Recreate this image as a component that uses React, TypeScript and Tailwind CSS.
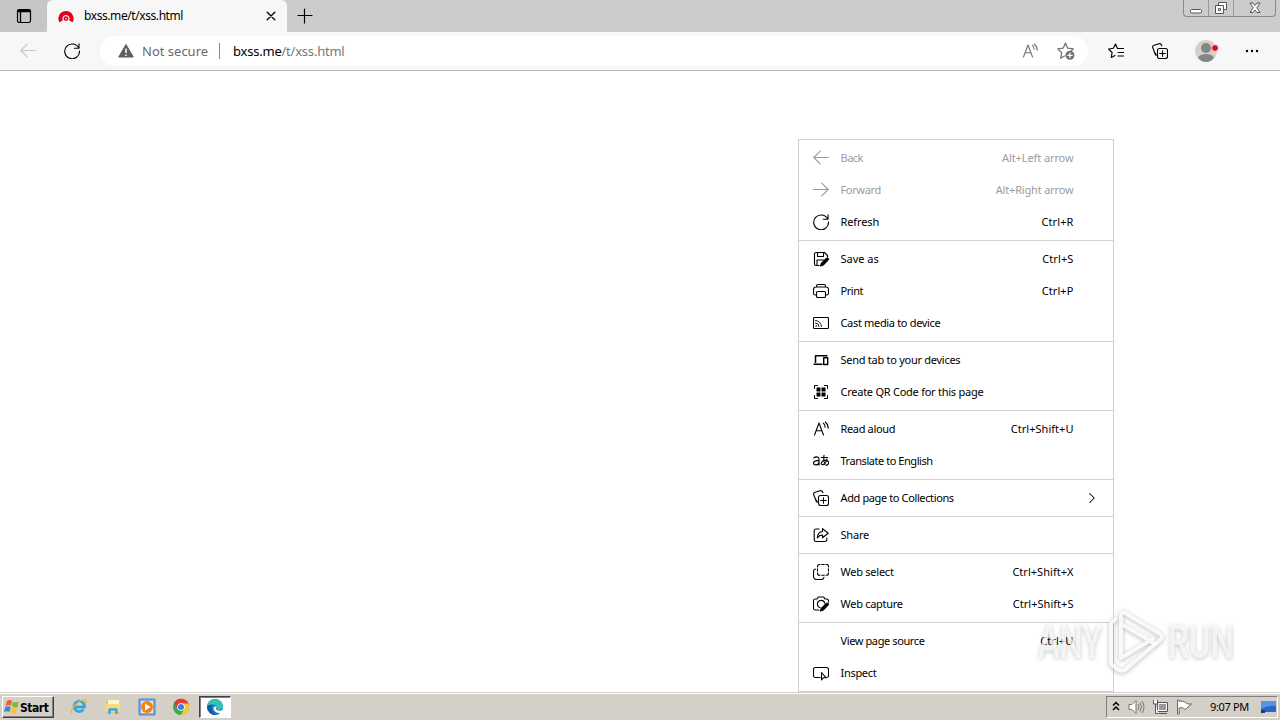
import React from "react";

type P = { children?: React.ReactNode; className?: string; size?: number };

function Icon({ children, className = "", size = 16 }: P) {
  return (
    <svg width={size} height={size} viewBox="0 0 16 16" fill="none" stroke="currentColor" strokeWidth="1.1" strokeLinecap="round" strokeLinejoin="round" className={"shrink-0 " + className}>
      {children}
    </svg>
  );
}

const icons: Record<string, React.ReactNode> = {
  back: <path d="M15.500 7.500H.8M7.200 1.100.8 7.500l6.400 6.400" />,
  forward: <path d="M.5 7.500h14.700M8.800 1.100 15.200 7.500l-6.400 6.400" />,
  refresh: <path d="M14.800 5.200A7.400 7.400 0 1 0 15.500 8M15 .8v4.500h-4.600" />,
  save: (
    <>
      <path d="M6 14.500H3A1.500 1.500 0 0 1 1.500 13V3A1.500 1.500 0 0 1 3 1.500h8.500l3 3V6M4.500 1.700v3.800h6V1.700M4 14.300V9h6.500" />
      <path d="m7.500 15 .8-2.500 5-5c1.300-1 2.700.3 1.700 1.600L10.200 14z" fill="currentColor" />
    </>
  ),
  print: (
    <>
      <path d="M3.500 12H2.300A1.800 1.800 0 0 1 .5 10.200V6.500A2.500 2.500 0 0 1 3 4h10a2.500 2.500 0 0 1 2.500 2.500v3.700a1.800 1.800 0 0 1-1.800 1.800h-1.200M3.500 4V3A1.500 1.500 0 0 1 5 1.500h6A1.500 1.500 0 0 1 12.500 3v1" />
      <rect x="3.500" y="8.500" width="9" height="6" rx="1.300" />
    </>
  ),
  cast: (
    <>
      <rect x=".5" y="2.500" width="15" height="11" rx="1" />
      <path d="M2.500 5.500A6 6 0 0 1 8.500 11.500M2.500 8A3.500 3.500 0 0 1 6 11.500" strokeWidth=".9" />
      <circle cx="3.200" cy="11" r=".8" fill="currentColor" stroke="none" />
    </>
  ),
  send: (
    <>
      <path d="M2.500 11V3.700h12M.5 12.300h9" strokeWidth="1.500" strokeLinecap="butt" />
      <rect x="10.700" y="5.700" width="4" height="6.800" strokeWidth="1.400" />
    </>
  ),
  qr: (
    <>
      <path d="M1.500 4.500v-3h3M11.500 1.500h3v3M1.500 11.500v3h3M11.500 14.500h3v-3" strokeWidth="1" />
      <path d="M3.500 3.500h4v4h-4zM8.500 3.500h4v4h-4zM3.500 8.500h4v4h-4zM8.500 8.500h4v4h-4z" fill="currentColor" stroke="none" />
    </>
  ),
  read: <path d="m1.500 14 4.500-12 4.500 12M3 9.800h6M10.300 2.200c1.200 1 1.800 2.400 1.800 4M12.300 1c2 1.700 2.900 3.800 2.900 6.200" />,
  translate: (
    <>
      <path d="M.9 4.800C2.500 3.600 6 3.200 6 6.300V12M6 7.300c-3 0-5.500.5-5.500 2.700 0 2.800 5 2.400 5.500-.6" strokeWidth="1.200" />
      <path d="M8.200 4.500h6.500M11 2.300c-.5 3.200 0 6.700.8 9.200M14 6c-.8 2.600-2.700 5.700-4.500 5.700-2.200 0-1.500-4 2.300-4.300 5-.3 4.900 4.300 1.200 5" />
    </>
  ),
  collections: (
    <>
      <path d="M3.500 12 .8 4.800C.3 3.500.8 2.700 2.100 2.300L7 .8c1.300-.4 2 0 2.500 1.200l.3.800M4.300 12.300 3.300 10" />
      <rect x="5.500" y="5.500" width="10" height="10" rx="2" />
      <path d="M10.500 7.700v5.600M7.700 10.500h5.600" />
    </>
  ),
  share: (
    <>
      <path d="M6 2H3A1.800 1.800 0 0 0 1.200 3.800v9A1.800 1.800 0 0 0 3 14.500h9a1.800 1.800 0 0 0 1.800-1.800V11" />
      <path d="M9.500 4.500V1.600l5.700 4.600-5.700 4.500V8C7 8 5.500 9 4.300 11c.2-4 2-6.300 5.200-6.500z" />
    </>
  ),
  select: (
    <>
      <path d="M4.500 3V2.500q0-2 2-2H7M8.800.5h2.400M13 .5h.5q2 0 2 2V3M15.500 4.700V7M15.500 8.700v.6q0 2-2 2H13M11.200 11.300H8.800M7 11.300h-.5q-2 0-2-2v-.6M4.500 7V4.700" />
      <path d="M2.700 5C1.200 5.200.5 6 .5 7.500v5a3 3 0 0 0 3 3h5c1.500 0 2.300-.8 2.500-2.300" />
    </>
  ),
  capture: (
    <>
      <path d="M6 14H2.300A1.800 1.800 0 0 1 .5 12.200V4.800A1.800 1.800 0 0 1 2.300 3H4l1.200-2h5.600L12 3h1.700a1.800 1.800 0 0 1 1.800 1.800V6M7.200 11.700a3.700 3.700 0 1 1 4.500-4.500" />
      <path d="m7.500 15 .8-2.500 5-5c1.300-1 2.700.3 1.700 1.600L10.200 14z" fill="currentColor" />
    </>
  ),
  inspect: (
    <>
      <path d="M7 12.500H2.300A1.800 1.800 0 0 1 .5 10.700V4.300A1.800 1.800 0 0 1 2.300 2.500h11.400a1.800 1.800 0 0 1 1.800 1.800v6.400c0 1-.7 1.800-1.800 1.800" />
      <path d="M8.500 7.500v7.500l1.800-2.200h2.900z" />
    </>
  ),
};

type Item = { icon?: string; label: string; keys?: string; off?: boolean; sub?: boolean; track: string; keyTrack?: string };

const groups: Item[][] = [
  [
    { icon: "back", label: "Back", keys: "Alt+Left arrow", off: true, track: "tracking-[-0.5px]", keyTrack: "tracking-[-0.1px]" },
    { icon: "forward", label: "Forward", keys: "Alt+Right arrow", off: true, track: "tracking-[-0.35px]", keyTrack: "tracking-[-0.17px]" },
    { icon: "refresh", label: "Refresh", keys: "Ctrl+R", track: "tracking-[-0.1px]", keyTrack: "tracking-[0.1px]" },
  ],
  [
    { icon: "save", label: "Save as", keys: "Ctrl+S", track: "tracking-[0px]", keyTrack: "tracking-[0.1px]" },
    { icon: "print", label: "Print", keys: "Ctrl+P", track: "tracking-[-0.45px]", keyTrack: "tracking-[0.1px]" },
    { icon: "cast", label: "Cast media to device", track: "tracking-[-0.33px]" },
  ],
  [
    { icon: "send", label: "Send tab to your devices", track: "tracking-[-0.27px]" },
    { icon: "qr", label: "Create QR Code for this page", track: "tracking-[-0.25px]" },
  ],
  [
    { icon: "read", label: "Read aloud", keys: "Ctrl+Shift+U", track: "tracking-[-0.35px]" },
    { icon: "translate", label: "Translate to English", track: "tracking-[-0.45px]" },
  ],
  [{ icon: "collections", label: "Add page to Collections", sub: true, track: "tracking-[-0.38px]" }],
  [{ icon: "share", label: "Share", track: "tracking-[-0.2px]" }],
  [
    { icon: "select", label: "Web select", keys: "Ctrl+Shift+X", track: "tracking-[-0.25px]" },
    { icon: "capture", label: "Web capture", keys: "Ctrl+Shift+S", track: "tracking-[-0.28px]" },
  ],
  [
    { label: "View page source", keys: "Ctrl+U", track: "tracking-[-0.39px]", keyTrack: "tracking-[0.1px]" },
    { icon: "inspect", label: "Inspect", track: "tracking-[-0.3px]" },
  ],
];

function ContextMenu() {
  return (
    <div className="absolute left-[798px] top-[139px] w-[316px] border border-[#d0d0d0] bg-white text-[11px] text-black">
      {groups.map((g, i) => (
        <div key={i} className={"py-[2px] " + (i ? "border-t border-[#d2d2d2]" : "")}>
          {g.map((it) => (
            <div key={it.label} className={"flex h-8 items-center pl-[14px] " + (it.off ? "text-[#9c9c9c]" : "")}>
              <div className="w-[27.5px] shrink-0">{it.icon && <Icon>{icons[it.icon]}</Icon>}</div>
              <span className={"whitespace-nowrap " + it.track}>{it.label}</span>
              <span className={"ml-auto mr-[39.5px] whitespace-nowrap " + (it.keyTrack ?? "tracking-[0.03px]")}>{it.keys}</span>
              {it.sub && <Icon size={12} className="-ml-[27px] mr-[15px]"><path d="m5 2 6 6-6 6" strokeWidth="1.400" /></Icon>}
            </div>
          ))}
        </div>
      ))}
    </div>
  );
}

function TitleBar() {
  return (
    <div className="relative flex h-8 bg-[#cccccc]">
      <div className="flex w-[47px] items-center justify-center rounded-br-md bg-[#c6c6c6]">
        <Icon size={16}><rect x="1.500" y="1.500" width="13" height="13" rx="1.800" strokeWidth="1.200" /><path d="M1.500 3h13" strokeWidth="2.500" strokeLinecap="butt" /><path d="M4.500 4v10" strokeWidth="1.300" /></Icon>
      </div>
      <div className="flex w-[240px] items-center rounded-t-md bg-[#f7f7f7]">
        <svg width="16" height="16" viewBox="0 0 16 16" className="ml-[11px]">
          <path d="M3.100 13.400A5.600 5.600 0 1 1 12.900 13.400" fill="none" stroke="#e2001a" strokeWidth="4" />
          <circle cx="8" cy="10.600" r="2.400" fill="#e2001a" />
          <circle cx="8" cy="10.600" r=".8" fill="#f7f7f7" />
        </svg>
        <span className="ml-[10px] text-[12px] tracking-[-0.42px] text-black">bxss.me/t/xss.html</span>
        <Icon size={10} className="ml-auto mr-[11px]"><path d="m2 2 12 12M14 2 2 14" strokeWidth="2.200" /></Icon>
      </div>
      <div className="flex items-center pl-[10px]"><Icon size={16}><path d="M7.500 1v14M1 7.500h14" strokeWidth="1.200" /></Icon></div>
      <div className="ml-auto mr-[4px] flex h-[17px] rounded-b border border-t-0 border-[#8a8a8a]">
        <div className="flex w-[25px] items-center justify-center border-r border-[#999]"><svg width="14" height="12" viewBox="0 0 14 12"><rect x="1.500" y="7.500" width="11" height="3.500" rx="1" fill="#fff" stroke="#555" /></svg></div>
        <div className="flex w-[25px] items-center justify-center border-r border-[#999]"><svg width="14" height="14" viewBox="0 0 14 14" fill="#fff" stroke="#555"><path d="M4.500 1.500h8v7h-8z" /><path d="M1.500 4.500h8v8h-8z" /><path d="M4.500 7.500h2v2h-2z" /></svg></div>
        <div className="flex w-[41px] items-center justify-center"><svg width="12" height="12" viewBox="0 0 12 12"><path d="m1 1 3 0 2 2.500L8 1h3L7.800 5.800 11 10.500H8L6 8l-2 2.500H1l3.200-4.700z" fill="#fff" stroke="#555" /></svg></div>
      </div>
    </div>
  );
}

function ToolBar() {
  return (
    <div className="flex h-[39px] items-center border-b border-[#b9b9b9] bg-[#f7f7f7] text-black">
      <Icon className="ml-5 text-[#c5c5c5]">{icons.back}</Icon>
      <Icon className="ml-7">{icons.refresh}</Icon>
      <div className="ml-5 flex h-[30px] w-[988px] items-center rounded-full bg-white text-[13px] text-[#6a6a6a]">
        <svg width="16" height="16" viewBox="0 0 16 16" className="ml-[18px]"><path d="M8 1.500 15.300 14H.7z" fill="#5f5f5f" stroke="#5f5f5f" strokeLinejoin="round" /><path d="M8 5.500V10M8 11.500V13" stroke="#fff" strokeWidth="1.500" /></svg>
        <span className="ml-[8px] mt-px w-[67px] whitespace-nowrap">Not secure</span>
        <div className="ml-[10px] h-4 w-px bg-[#8a8a8a]" />
        <span className="ml-[13px] mt-px tracking-[-0.22px]"><span className="text-black">bxss.me</span><span className="text-[#777]">/t/xss.html</span></span>
        <Icon className="ml-auto mr-[19px] text-[#707070]">{icons.read}</Icon>
        <Icon size={18} className="mr-[13px] text-[#707070]">
          <path d="m7.500 1 2 4.500 5 .5-2 2M7.500 1l-2 4.500-4.800.6 3.500 3.400-1 5 3.500-2" />
          <circle cx="11.500" cy="11.800" r="4" fill="currentColor" stroke="none" /><path d="M11.500 9.800v4M9.500 11.800h4" stroke="#fff" />
        </Icon>
      </div>
      <Icon className="ml-5"><path d="M9.500 5.500 7.500 1 5.300 5.300.6 6l3.500 3.500-.8 5 3.700-2M9.500 5.500h6M10 9.500h5.500M10 13h5.500" /></Icon>
      <Icon className="ml-7">{icons.collections}</Icon>
      <svg width="24" height="24" viewBox="0 0 24 24" className="ml-[27px]">
        <circle cx="11" cy="12" r="11" fill="#d3d0cc" /><circle cx="11" cy="9" r="5" fill="#858585" /><path d="M3 18.500Q5 15 11 15t8 3.500C17 21.500 14 23 11 23s-6-1.500-8-4.500z" fill="#858585" />
        <circle cx="20" cy="9" r="3.300" fill="#e00b1c" stroke="#f7f7f7" strokeWidth=".6" />
      </svg>
      <svg width="14" height="4" viewBox="0 0 14 4" className="ml-[26px]"><circle cx="2" cy="2" r="1.200" /><circle cx="7" cy="2" r="1.200" /><circle cx="12" cy="2" r="1.200" /></svg>
    </div>
  );
}

function Watermark() {
  return (
    <svg width="212" height="76" viewBox="0 0 212 76" className="pointer-events-none absolute left-[1030px] top-[602px] overflow-visible">
      <g className="drop-shadow-[0_1px_2px_rgba(0,0,0,0.32)]" fill="#fff" fillOpacity=".7" fontFamily="Roboto, sans-serif" fontSize="47" fontWeight="500">
        <text x="8" y="56" textLength="64" lengthAdjust="spacingAndGlyphs">ANY</text>
        <text x="138" y="56" textLength="66" lengthAdjust="spacingAndGlyphs">RUN</text>
        <g fill="none" stroke="#fff" strokeOpacity=".85" strokeWidth="4" strokeLinejoin="round">
          <path d="M91 38V14q0-5 4-3l35 21q4 3 0 6L95 68q-4 2-8-1l-6-5V21l6-5" />
          <path d="m93 23 34 20M91 38v18l33-20" />
        </g>
      </g>
    </svg>
  );
}

function TaskBar() {
  return (
    <div className="flex h-[28px] items-center border-t border-[#d0cdc7] bg-[#d4d0c8] text-[11px] text-black shadow-[inset_0_1px_0_#fff]">
      <div className="ml-[2px] mt-px flex h-[22px] w-[52px] items-center border border-b-[#404040] border-l-white border-r-[#404040] border-t-white pl-px shadow-[inset_-1px_-1px_0_#808080]">
        <svg width="16" height="16" viewBox="0 0 16 16" className="shrink-0"><path d="M3 2q3-2 5 0L7 7Q5 5 1.500 7z" fill="#e9622b" /><path d="M9 2.500q3 2 6 0L13.500 8Q11 9.500 8 7.500z" fill="#7fba35" /><path d="M1.300 8Q4 6.500 6.600 8l-1.300 5Q3 11.500 0 13z" fill="#3b83d3" /><path d="M7.700 8.500q3 2 5.500.7l-1.500 5q-2.500 1.300-5.400-.7z" fill="#f9c22e" /></svg>
        <span className="mt-px font-['DejaVu_Sans_Condensed','DejaVu_Sans',sans-serif] text-[12px] font-bold tracking-[-0.45px]">Start</span>
      </div>
      <svg width="18" height="18" viewBox="0 0 18 18" className="ml-[16px]"><path d="M13.500 11.500A5.200 5.200 0 1 1 14.500 9H5" fill="none" stroke="#31a4df" strokeWidth="2.800" /><path d="M2 15C-1 12 10 1 15 2c2 .5 1 2.500 0 3.500" fill="none" stroke="#e9b735" strokeWidth="1.400" /></svg>
      <svg width="18" height="18" viewBox="0 0 18 18" className="ml-4"><path d="M2 3h5l1 2h8v10H2z" fill="#e8c657" /><path d="M4 2h11v6H4z" fill="#fbf5d2" /><path d="M2 6h14v8H2z" fill="#f3db7e" /><path d="M4 16v-4q0-2 2-2h6q2 0 2 2v4h-3v-3H7v3z" fill="#5aaad8" /></svg>
      <svg width="18" height="18" viewBox="0 0 18 18" className="ml-4"><path d="M1 1h16v16H1z" fill="#79aedb" stroke="#4d86bd" /><path d="M3 3h12v12H3z" fill="#dcecf7" /><circle cx="9" cy="9" r="6" fill="#f58212" /><path d="m7 5.500 5.500 3.500L7 12.500z" fill="#fff" /></svg>
      <svg width="18" height="18" viewBox="0 0 18 18" className="ml-4"><circle cx="9" cy="9" r="8" fill="#34a853" /><path d="M2 5a8 8 0 0 1 14.900 2H9L5.500 11z" fill="#e53b2e" /><path d="M9 5.500h7.200A8 8 0 0 1 8.500 17l4-6z" fill="#fbc92e" /><circle cx="9" cy="9" r="3.800" fill="#fff" /><circle cx="9" cy="9" r="3" fill="#357de8" /></svg>
      <div className="ml-[9px] mt-px flex h-[22px] w-[32px] items-center justify-center border border-b-white border-l-[#404040] border-r-white border-t-[#404040] bg-white shadow-[inset_1px_1px_0_#808080]">
        <svg width="18" height="18" viewBox="0 0 18 18"><circle cx="9" cy="9" r="8" fill="#137dc5" /><path d="M1.200 8A8 8 0 0 1 17 8c.3 3-2.500 4.500-6 3.500 1.500-5-5-6.500-9.800-3.500z" fill="#32c6b1" /><path d="M6 7c-2 3 .5 8 5 9.500A8 8 0 0 1 1 9q1-3 5-2z" fill="#1756a5" /><path d="M10 8c1 1 0 2.500 0 3 1 2 4 2 6.500 1L15 15c-4 .5-8-2-7.500-5.500z" fill="#fff" /></svg>
      </div>
      <div className="ml-auto mr-[2px] mt-px flex h-[22px] w-[172px] items-center border border-b-white border-l-[#808080] border-r-white border-t-[#808080]">
        <svg width="8" height="12" viewBox="0 0 8 12" className="ml-[5px]" fill="none" stroke="#000" strokeWidth="1.500"><path d="m1 4.500 3-3 3 3M1 9l3-3 3 3" /></svg>
        <svg width="17" height="16" viewBox="0 0 17 16" className="ml-[8px]" fill="#fff" stroke="#777"><path d="M1 5.500h3l4-4v13l-4-4H1z" /><path d="M10 5q2 3 0 6M12 3.500q3 4.500 0 9M14 2q4 6 0 12" fill="none" /></svg>
        <svg width="17" height="16" viewBox="0 0 17 16" className="ml-[7px]" fill="#f8f8f8" stroke="#555"><path d="M5.500 3.500h10v9h-10zM7 14.500h8" /><path d="M7 5h7v6H7z" fill="#999" stroke="none" /><path d="M1.500 1v4h4V1M3.500 5v9.500h3" /></svg>
        <svg width="17" height="16" viewBox="0 0 17 16" className="ml-[7px]" fill="#fff" stroke="#666"><path d="M1.500 1v14h1.700V9c2-.5 4-.5 6 1.500L15.500 5c-2 0-4 .5-6-1.500-2-1.500-4-1.500-6.300-1.200V1z" /></svg>
        <span className="ml-[17px] whitespace-nowrap tracking-[-0.35px]">9:07 PM</span>
        <svg width="16" height="14" viewBox="0 0 16 14" className="ml-auto mr-px"><path d="M1 1h15v11H1z" fill="#2667c7" /><path d="M1 1h15v5Q8 5 1 9z" fill="#5593e4" /><path d="M1 10h4v3H1z" fill="#173b83" /></svg>
      </div>
    </div>
  );
}

export default function App() {
  return (
    <div className="relative flex h-[720px] w-[1280px] flex-col overflow-hidden bg-white font-['Noto_Sans','Open_Sans',sans-serif]">
      <TitleBar />
      <ToolBar />
      <main className="flex-1 bg-white" />
      <TaskBar />
      <ContextMenu />
      <Watermark />
    </div>
  );
}
